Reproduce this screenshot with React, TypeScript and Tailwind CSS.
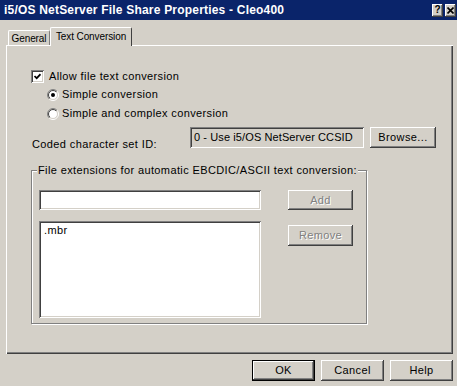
import React from "react";

const raised =
  "bg-[#d4d0c8] shadow-[inset_-1px_-1px_#404040,inset_1px_1px_#ffffff,inset_-2px_-2px_#808080,inset_2px_2px_#d4d0c8]";
const sunken =
  "shadow-[inset_1px_1px_#808080,inset_-1px_-1px_#ffffff,inset_2px_2px_#404040,inset_-2px_-2px_#d4d0c8]";
const disabledText = "text-[#808080] [text-shadow:1px_1px_0_#ffffff]";

const Radio = ({ checked }: { checked: boolean }) => (
  <svg width="12" height="12" viewBox="0 0 12 12" className="shrink-0">
    <defs>
      <linearGradient id="radioOuter" x1="0" y1="0" x2="1" y2="1">
        <stop offset="0.5" stopColor="#808080" />
        <stop offset="0.5" stopColor="#ffffff" />
      </linearGradient>
      <linearGradient id="radioInner" x1="0" y1="0" x2="1" y2="1">
        <stop offset="0.5" stopColor="#404040" />
        <stop offset="0.5" stopColor="#d4d0c8" />
      </linearGradient>
    </defs>
    <circle cx="6" cy="6" r="5.5" fill="none" stroke="url(#radioOuter)" strokeWidth="1" />
    <circle cx="6" cy="6" r="4.5" fill="#ffffff" stroke="url(#radioInner)" strokeWidth="1" />
    {checked && <circle cx="6" cy="6" r="2" fill="#000000" />}
  </svg>
);

const Button = ({
  children,
  className = "",
  disabled = false,
  isDefault = false,
}: {
  children: React.ReactNode;
  className?: string;
  disabled?: boolean;
  isDefault?: boolean;
}) => (
  <button
    className={`flex items-center justify-center ${raised} ${
      disabled ? disabledText : "text-black"
    } ${isDefault ? "border border-black" : ""} ${className}`}
  >
    {children}
  </button>
);

export default function App() {
  return (
    <div className="w-[457px] h-[386px] bg-[#d4d0c8] flex flex-col text-[11px] leading-[13px] tracking-[0.38px] text-black [font-family:'Liberation_Sans',Arial,sans-serif]">
      {/* Title bar */}
      <div className="h-[20px] bg-[#0a246a] flex items-center pl-[4px] pr-[1px]">
        <span className="text-white font-bold text-[12px] tracking-[0.2px]">
          i5/OS NetServer File Share Properties - Cleo400
        </span>
        <div className="ml-auto flex gap-[2px]">
          <div className={`w-[11px] h-[13px] flex items-center justify-center ${raised}`}>
            <span className="font-bold text-[10px] leading-[10px] tracking-normal">?</span>
          </div>
          <div className={`w-[11px] h-[13px] flex items-center justify-center ${raised}`}>
            <svg width="7" height="7" viewBox="0 0 7 7">
              <path d="M0.5 0.5 L6.5 6.5 M6.5 0.5 L0.5 6.5" stroke="#000" strokeWidth="1.6" />
            </svg>
          </div>
        </div>
      </div>

      <div className="flex flex-col pl-[6px] pr-[4px] mt-[7px]">
        {/* Tabs */}
        <div className="flex items-end h-[18px] pl-[2px] text-[10px] tracking-[-0.1px] whitespace-nowrap">
          <div className="w-[42px] h-[15px] border-t border-l border-white border-r border-r-[#808080] rounded-t-[2px] flex items-center justify-center">
            General
          </div>
          <div className="relative z-10 -mb-px w-[82px] h-[19px] bg-[#d4d0c8] border-t border-l border-white border-r border-r-[#404040] rounded-t-[2px] flex items-center justify-center pb-[2px]">
            Text Conversion
          </div>
        </div>

        {/* Panel */}
        <div className="h-[309px] shadow-[inset_1px_1px_#ffffff,inset_-1px_-1px_#404040,inset_-2px_-2px_#808080] pt-[25px] pl-[25px] flex flex-col">
          <div className="flex items-center h-[13px] gap-[5px]">
            <div className={`w-[13px] h-[13px] bg-white flex items-center justify-center ${sunken}`}>
              <svg width="7" height="7" viewBox="0 0 7 7">
                <path d="M0.5 3 L2.7 5.2 L6.5 1.2" fill="none" stroke="#000" strokeWidth="1.7" />
              </svg>
            </div>
            <span>Allow file text conversion</span>
          </div>
          <div className="flex items-center h-[13px] gap-[3px] ml-[16px] mt-[5px]">
            <Radio checked />
            <span>Simple conversion</span>
          </div>
          <div className="flex items-center h-[13px] gap-[3px] ml-[16px] mt-[6px]">
            <Radio checked={false} />
            <span>Simple and complex conversion</span>
          </div>

          <div className="flex items-start h-[21px] mt-[7px]">
            <span className="w-[159px] pl-[1px] mt-[11px]">Coded character set ID:</span>
            <div className={`w-[174px] h-[21px] flex items-center pl-[4px] whitespace-nowrap tracking-[0.1px] ${sunken}`}>
              0 - Use i5/OS NetServer CCSID
            </div>
            <Button className="w-[66px] h-[21px] ml-[6px]">Browse...</Button>
          </div>

          {/* Group box */}
          <div className="relative w-[336px] h-[154px] mt-[22px] border border-[#808080] shadow-[inset_1px_1px_#ffffff,1px_1px_#ffffff] pt-[19px] pl-[7px] flex">
            <span className="absolute -top-[7px] left-[5px] px-[1px] bg-[#d4d0c8] whitespace-nowrap">
              File extensions for automatic EBCDIC/ASCII text conversion:
            </span>
            <div className="flex flex-col w-[222px]">
              <div className={`h-[20px] bg-white ${sunken}`} />
              <div className={`h-[97px] mt-[11px] bg-white pt-[3px] pl-[5px] ${sunken}`}>.mbr</div>
            </div>
            <div className="flex flex-col ml-[27px]">
              <Button disabled className="w-[65px] h-[20px]">
                Add
              </Button>
              <Button disabled className="w-[65px] h-[21px] mt-[15px]">
                Remove
              </Button>
            </div>
          </div>
        </div>

        {/* Dialog buttons */}
        <div className="flex justify-end gap-[6px] mt-[6px]">
          <Button isDefault className="w-[63px] h-[21px]">
            OK
          </Button>
          <Button className="w-[63px] h-[21px]">Cancel</Button>
          <Button className="w-[63px] h-[21px]">Help</Button>
        </div>
      </div>
    </div>
  );
}
